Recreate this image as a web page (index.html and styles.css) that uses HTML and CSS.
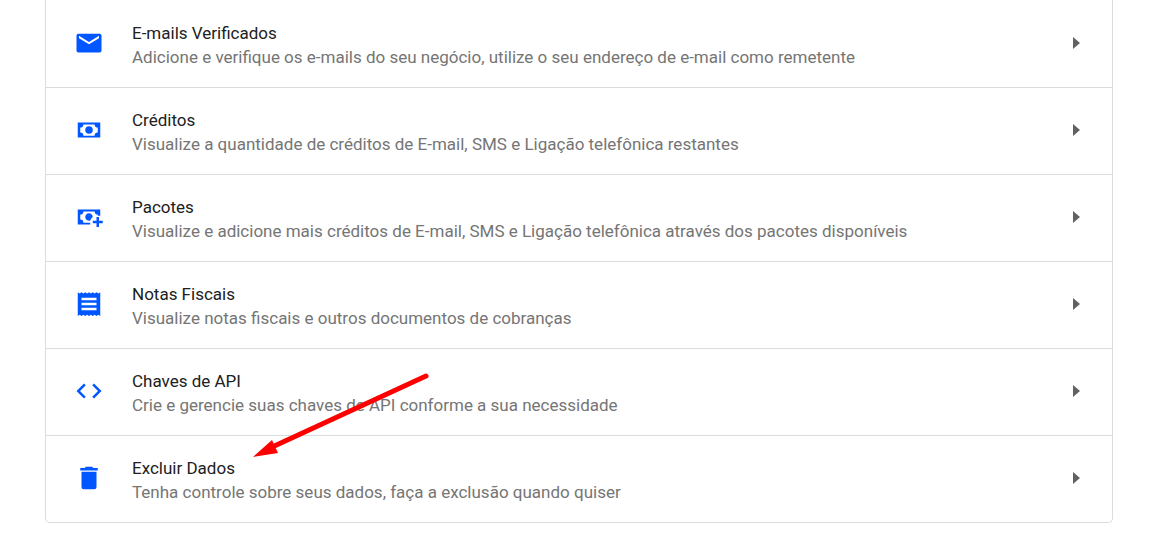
FILE: index.html
```html
<!DOCTYPE html>
<html lang="pt-BR">
<head>
    <meta charset="UTF-8">
    <meta name="viewport" content="width=device-width, initial-scale=1.0">
    <title>Configurações</title>

    <link rel="stylesheet" href="styles.css">
</head>
<body>
    <main class="container">
        <ul class="settings">
            <li>
                <a class="item" href="#emails">
                    <svg class="icon" viewBox="0 0 24 24"><path d="M20 8.200L12 13 4 8.200V6.200l8 5 8-5M20.500 4.500h-17A1.500 1.500 0 0 0 2 6v12a1.500 1.500 0 0 0 1.500 1.500h17A1.500 1.500 0 0 0 22 18V6a1.500 1.500 0 0 0-1.500-1.500z"/></svg>
                    <span class="text">
                        <span class="title">E-mails Verificados</span>
                        <span class="description">Adicione e verifique os e-mails do seu negócio, utilize o seu endereço de e-mail como remetente</span>
                    </span>
                    <svg class="arrow" viewBox="0 0 7 12"><path d="M0 0l7 6-7 6z"/></svg>
                </a>
            </li>
            <li>
                <a class="item" href="#creditos">
                    <svg class="icon" viewBox="0 0 24 24"><path fill-rule="evenodd" d="M3 6h18v12H3zM7.500 7.500a2.500 2.500 0 0 1-2.500 2.500v4a2.500 2.500 0 0 1 2.500 2.500h9a2.500 2.500 0 0 1 2.500-2.500v-4a2.500 2.500 0 0 1-2.500-2.500z"/><circle cx="12" cy="12" r="3"/></svg>
                    <span class="text">
                        <span class="title">Créditos</span>
                        <span class="description">Visualize a quantidade de créditos de E-mail, SMS e Ligação telefônica restantes</span>
                    </span>
                    <svg class="arrow" viewBox="0 0 7 12"><path d="M0 0l7 6-7 6z"/></svg>
                </a>
            </li>
            <li>
                <a class="item" href="#pacotes">
                    <svg class="icon" viewBox="0 0 24 24"><path d="M15 12a3 3 0 1 0-2 2.800A6 6 0 0 1 15 12zM13 16.500H7.500a2.500 2.500 0 0 0-2.500-2.500v-4a2.500 2.500 0 0 0 2.500-2.500h9a2.500 2.500 0 0 0 2.500 2.500v1h2V6H3v12h10zM18 12h2v3h3v2h-3v3h-2v-3h-3v-2h3z"/></svg>
                    <span class="text">
                        <span class="title">Pacotes</span>
                        <span class="description">Visualize e adicione mais créditos de E-mail, SMS e Ligação telefônica através dos pacotes disponíveis</span>
                    </span>
                    <svg class="arrow" viewBox="0 0 7 12"><path d="M0 0l7 6-7 6z"/></svg>
                </a>
            </li>
            <li>
                <a class="item" href="#notas">
                    <svg class="icon" viewBox="0 0 24 24"><path fill-rule="evenodd" d="M19.500 3.500L18 2.500l-1.500 1-1.500-1-1.500 1-1.500-1-1.500 1-1.500-1-1.500 1-1.500-1-1.500 1L3 2.500v19l1.500-1 1.500 1 1.500-1 1.500 1 1.500-1 1.500 1 1.500-1 1.500 1 1.500-1 1.500 1 1.500-1 1.500 1v-19zM6 7v2h12V7zM6 11v2h12v-2zM6 15v2h12v-2z"/></svg>
                    <span class="text">
                        <span class="title">Notas Fiscais</span>
                        <span class="description">Visualize notas fiscais e outros documentos de cobranças</span>
                    </span>
                    <svg class="arrow" viewBox="0 0 7 12"><path d="M0 0l7 6-7 6z"/></svg>
                </a>
            </li>
            <li>
                <a class="item" href="#api">
                    <svg class="icon" viewBox="0 0 24 24"><path d="M9.400 16.600L4.800 12l4.600-4.600L8 6l-6 6 6 6 1.400-1.400zM14.600 16.600l4.600-4.600-4.600-4.600L16 6l6 6-6 6-1.400-1.400z"/></svg>
                    <span class="text">
                        <span class="title">Chaves de API</span>
                        <span class="description">Crie e gerencie suas chaves de API conforme a sua necessidade</span>
                    </span>
                    <svg class="arrow" viewBox="0 0 7 12"><path d="M0 0l7 6-7 6z"/></svg>
                </a>
            </li>
            <li>
                <a class="item" href="#excluir">
                    <svg class="icon" viewBox="0 0 24 24"><path d="M6 19a2 2 0 0 0 2 2h8a2 2 0 0 0 2-2V7H6zM19 4h-3.500l-1-1h-5l-1 1H5v2h14z"/></svg>
                    <span class="text">
                        <span class="title">Excluir Dados</span>
                        <span class="description">Tenha controle sobre seus dados, faça a exclusão quando quiser</span>
                    </span>
                    <svg class="arrow" viewBox="0 0 7 12"><path d="M0 0l7 6-7 6z"/></svg>
                </a>
            </li>
        </ul>

        <!-- points at "Excluir Dados" -->
        <svg class="pointer" viewBox="0 0 180 90">
            <path class="line" d="M176 6L20 78"/>
            <path class="head" d="M3 87l19-17 6 13z"/>
        </svg>
    </main>
</body>
</html>
```

FILE: styles.css
```css
body{
    margin: 0;
    background-color: #fff;
    font-family: Roboto, "Liberation Sans", sans-serif;
}

.container{
    position: relative;
    margin: 0 54px 0 45px;
}

.settings{
    list-style: none;
    margin: 0;
    padding: 1px 0 0;
    border: 1px solid #dadce0;
    border-top: none;
    border-radius: 0 0 5px 5px;
}

.settings li + li{
    border-top: 1px solid #dadce0;
}

.item{
    display: flex;
    align-items: center;
    padding: 15px 32px 17px 28px;
    color: inherit;
    text-decoration: none;
}

.icon{
    flex: none;
    width: 30px;
    height: 30px;
    margin-right: 28px;
    fill: #0057ff;
}

.text{
    flex: 1;
    padding: 5px 0 1px;
    font-size: 17px;
    line-height: 24px;
}

.title{
    display: block;
    color: #212121;
}

.description{
    display: block;
    color: #757575;
}

.arrow{
    flex: none;
    width: 7px;
    height: 12px;
    fill: #616161;
}

.pointer{
    position: absolute;
    top: 370px;
    left: 205px;
    width: 180px;
    height: 90px;
    pointer-events: none;
}

.pointer .line{
    stroke: #f00;
    stroke-width: 5;
    stroke-linecap: round;
}

.pointer .head{
    fill: #f00;
}
```
